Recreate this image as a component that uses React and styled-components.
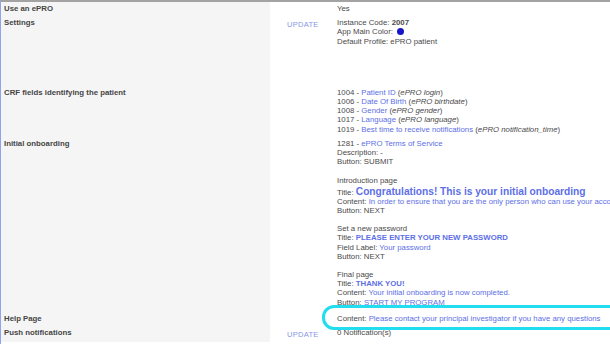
import React from 'react';
import styled, { createGlobalStyle } from 'styled-components';

const GlobalStyle = createGlobalStyle`
  html, body {
    margin: 0;
    padding: 0;
    background: #ffffff;
    overflow: hidden;
  }
  body {
    font-family: "Liberation Sans", Arial, Helvetica, sans-serif;
    font-size: 7.8px;
    line-height: 9.2px;
    color: #4a4a4a;
  }
`;

const Page = styled.div`
  width: 610px;
  height: 344px;
  box-sizing: border-box;
  border-top: 2px solid #a3a3a3;
  border-left: 1px solid #8fa3ef;
  overflow: hidden;
`;

const Table = styled.div`
  display: grid;
  grid-template-columns: 269px 67px 1fr;
`;

const Label = styled.div`
  background: #f5f5f5;
  padding: 2px 0 ${p => p.$pb || 3}px 3px;
  font-weight: 700;
  color: #454545;
`;

const Action = styled.div`
  padding: ${p => p.$pt || 2}px 0 3px 17px;
  color: #8797e6;
  font-size: 7.5px;
  letter-spacing: 0.3px;
`;

const Value = styled.div`
  position: relative;
  padding: 2px 0 ${p => p.$pb || 3}px 0;
  white-space: nowrap;
`;

const Line = styled.div``;

const Link = styled.span`
  color: #5d6fe6;
`;

const Em = styled.i`
  color: #4a4a4a;
`;

const Dot = styled.span`
  display: inline-block;
  width: 7px;
  height: 7px;
  border-radius: 50%;
  background: #1616c4;
  vertical-align: -1px;
  margin-left: 2px;
`;

const Block = styled.div`
  margin-top: ${p => p.$mt || 0}px;
`;

const BigTitle = styled.span`
  color: #5d6fe6;
  font-weight: 700;
  font-size: 10.2px;
  line-height: 11px;
`;

const BoldLink = styled.span`
  color: #5d6fe6;
  font-weight: 700;
`;

const Highlight = styled.div`
  position: absolute;
  left: -15px;
  right: 1px;
  top: -7px;
  bottom: -4px;
  border: 3px solid #22dcef;
  border-radius: 12px;
  pointer-events: none;
`;

function App() {
  return (
    <Page>
      <GlobalStyle />
      <Table>
        <Label>Use an ePRO</Label>
        <Action />
        <Value>Yes</Value>

        <Label>Settings</Label>
        <Action $pt={4}>UPDATE</Action>
        <Value $pb={40}>
          <Line>Instance Code: <b>2007</b></Line>
          <Line>App Main Color: <Dot /></Line>
          <Line>Default Profile: ePRO patient</Line>
        </Value>

        <Label>CRF fields identifying the patient</Label>
        <Action />
        <Value>
          <Line>1004 - <Link>Patient ID</Link> (<Em>ePRO login</Em>)</Line>
          <Line>1006 - <Link>Date Of Birth</Link> (<Em>ePRO birthdate</Em>)</Line>
          <Line>1008 - <Link>Gender</Link> (<Em>ePRO gender</Em>)</Line>
          <Line>1017 - <Link>Language</Link> (<Em>ePRO language</Em>)</Line>
          <Line>1019 - <Link>Best time to receive notifications</Link> (<Em>ePRO notification_time</Em>)</Line>
        </Value>

        <Label>Initial onboarding</Label>
        <Action />
        <Value $pb={5}>
          <Block>
            <Line>1281 - <Link>ePRO Terms of Service</Link></Line>
            <Line>Description: -</Line>
            <Line>Button: SUBMIT</Line>
          </Block>
          <Block $mt={10}>
            <Line>Introduction page</Line>
            <Line>Title: <BigTitle>Congratulations! This is your initial onboarding</BigTitle></Line>
            <Line>Content: <Link>In order to ensure that you are the only person who can use your account</Link></Line>
            <Line>Button: NEXT</Line>
          </Block>
          <Block $mt={9}>
            <Line>Set a new password</Line>
            <Line>Title: <BoldLink>PLEASE ENTER YOUR NEW PASSWORD</BoldLink></Line>
            <Line>Field Label: <Link>Your password</Link></Line>
            <Line>Button: NEXT</Line>
          </Block>
          <Block $mt={9}>
            <Line>Final page</Line>
            <Line>Title: <BoldLink>THANK YOU!</BoldLink></Line>
            <Line>Content: <Link>Your initial onboarding is now completed.</Link></Line>
            <Line>Button: <Link>START MY PROGRAM</Link></Line>
          </Block>
        </Value>

        <Label>Help Page</Label>
        <Action />
        <Value>
          <Line>Content: <Link>Please contact your principal investigator if you have any questions</Link></Line>
          <Highlight />
        </Value>

        <Label>Push notifications</Label>
        <Action $pt={4}>UPDATE</Action>
        <Value>0 Notification(s)</Value>
      </Table>
    </Page>
  );
}

export default App;
